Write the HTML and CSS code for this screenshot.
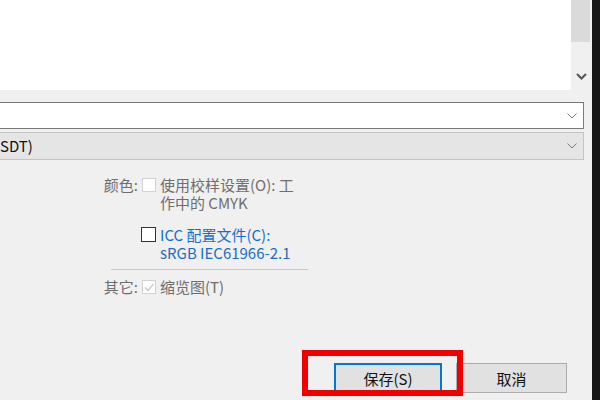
FILE: index.html
```html
<!DOCTYPE html>
<html>
<head>
<meta charset="utf-8">
<link rel="stylesheet" href="styles.css">
</head>
<body>
<div class="window">
  <div class="main">
    <div class="top">
      <div class="list"></div>
      <div class="scroll">
        <div class="thumb"></div>
        <svg class="scroll-arrow" width="11" height="7" viewBox="0 0 11 7"><path d="M1 1 L5.5 5.5 L10 1" fill="none" stroke="#555" stroke-width="2"/></svg>
      </div>
    </div>
    <div class="combo combo-edit">
      <span class="combo-text"></span>
      <svg class="chev" width="10" height="6" viewBox="0 0 10 6"><path d="M0.5 0.5 L5 5 L9.5 0.5" fill="none" stroke="#7a7a7a" stroke-width="1"/></svg>
    </div>
    <div class="combo combo-select">
      <span class="combo-text">SDT)</span>
      <svg class="chev" width="10" height="6" viewBox="0 0 10 6"><path d="M0.5 0.5 L5 5 L9.5 0.5" fill="none" stroke="#7a7a7a" stroke-width="1"/></svg>
    </div>
    <div class="options">
      <div class="opt-row">
        <span class="label">颜色:</span>
        <span class="box box-disabled"></span>
        <span class="opt-text muted">使用校样设置(O): 工<br>作中的 CMYK</span>
      </div>
      <div class="opt-row">
        <span class="label"></span>
        <span class="box box-active"></span>
        <span class="opt-text link">ICC 配置文件(C):<br>sRGB IEC61966-2.1</span>
      </div>
      <div class="sep"></div>
      <div class="opt-row">
        <span class="label">其它:</span>
        <span class="box box-disabled">
          <svg width="12" height="12" viewBox="0 0 12 12"><path d="M2 6.5 L5 9.5 L10.5 3" fill="none" stroke="#c8c8c8" stroke-width="1.2"/></svg>
        </span>
        <span class="opt-text muted">缩览图(T)</span>
      </div>
    </div>
    <div class="buttons">
      <button class="btn btn-default">保存(S)</button>
      <button class="btn">取消</button>
      <div class="highlight"></div>
    </div>
  </div>
  <div class="edge"></div>
</div>
</body>
</html>
```

FILE: styles.css
```css
html, body {
  margin: 0;
  padding: 0;
  width: 600px;
  height: 400px;
  overflow: hidden;
  font-family: "Noto Sans CJK SC", "Noto Sans", sans-serif;
  font-size: 15px;
}

.window {
  display: flex;
  width: 600px;
  height: 400px;
}

.main {
  flex: 1;
  display: flex;
  flex-direction: column;
  background: #f0f0f0;
  min-width: 0;
}

.edge {
  width: 8px;
  background: #171717;
}

.top {
  display: flex;
  height: 90px;
  padding-right: 2px;
}

.list {
  flex: 1;
  background: #ffffff;
}

.scroll {
  width: 19px;
  display: flex;
  flex-direction: column;
  align-items: center;
  background: #f0f0f0;
}

.thumb {
  width: 19px;
  height: 42px;
  background: #dadada;
}

.scroll-arrow {
  margin-top: 31px;
  margin-left: 1px;
}

.combo {
  display: flex;
  align-items: center;
  justify-content: space-between;
  margin-left: -1px;
  margin-right: 8px;
  padding-right: 6px;
  box-sizing: border-box;
}

.combo-edit {
  margin-top: 12px;
  height: 27px;
  background: #ffffff;
  border: 1px solid #7a7a7a;
}

.combo-select {
  margin-top: 3px;
  height: 28px;
  background: #e5e5e5;
  border: 1px solid #c4c4c4;
}

.combo-text {
  color: #111;
  line-height: 18px;
  padding-left: 0;
}

.options {
  display: flex;
  flex-direction: column;
  margin-top: 16px;
}

.opt-row {
  display: grid;
  grid-template-columns: 138px 22px auto;
  align-items: start;
  line-height: 18px;
  margin-bottom: 14px;
}

.label {
  text-align: right;
  color: #6e6e6e;
}

.box {
  width: 14px;
  height: 14px;
  margin-left: 4px;
  margin-top: 2px;
  box-sizing: border-box;
  background: #ffffff;
  display: flex;
  align-items: center;
  justify-content: center;
}

.box-disabled {
  border: 1px solid #d2d2d2;
}

.box-active {
  margin-left: 3px;
  width: 15px;
  height: 15px;
  margin-top: 1px;
  border: 1px solid #333333;
}

.opt-text {
  white-space: nowrap;
}

.muted {
  color: #6e6e6e;
}

.link {
  color: #1a6fc4;
}

.sep {
  height: 1px;
  background: #c8c8c8;
  width: 197px;
  margin-left: 111px;
  margin-top: -7px;
  margin-bottom: 8px;
}

.buttons {
  position: relative;
  display: flex;
  justify-content: flex-end;
  gap: 14px;
  margin-top: auto;
  margin-bottom: 7px;
  margin-right: 25px;
}

.btn {
  height: 30px;
  box-sizing: border-box;
  background: #e1e1e1;
  border: 1px solid #adadad;
  font-family: inherit;
  font-size: 15px;
  color: #111;
  padding: 0;
  width: 111px;
}

.btn-default {
  width: 108px;
  border: 2px solid #0078d7;
}

.highlight {
  position: absolute;
  left: 302px;
  top: -13px;
  width: 161px;
  height: 46px;
  box-sizing: border-box;
  border: 6px solid #f20000;
}
```
